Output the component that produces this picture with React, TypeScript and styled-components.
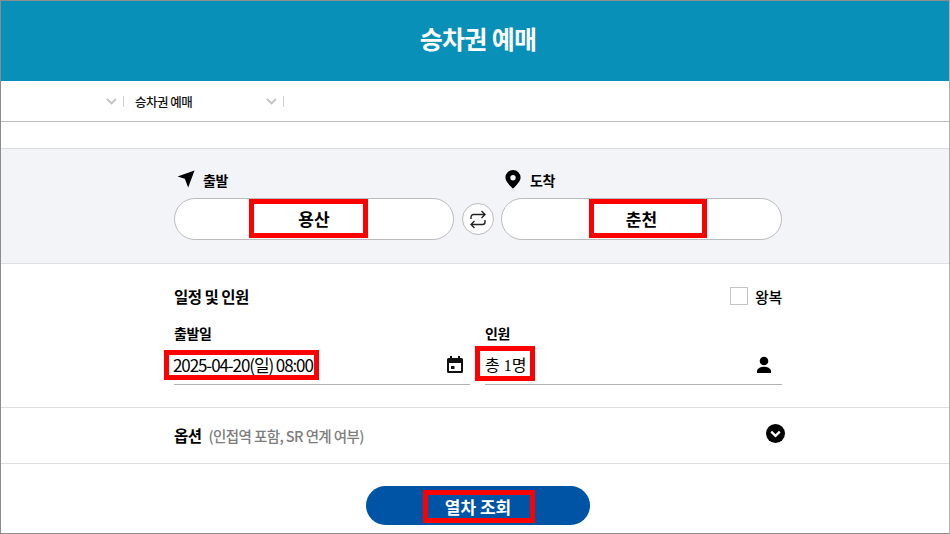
import React from "react";
import styled, { createGlobalStyle } from "styled-components";

const Global = createGlobalStyle`
  html, body { margin: 0; padding: 0; background: #fff; }
  body { font-family: "Noto Sans CJK KR", "Noto Sans", sans-serif; color: #000; }
  * { box-sizing: border-box; }
`;

const Frame = styled.div`
  width: 950px;
  height: 534px;
  overflow: hidden;
  border: 1px solid #8c8c8c;
  border-right-color: #b0b0b0;
  display: flex;
  flex-direction: column;
  background: #fff;
`;

const Header = styled.header`
  height: 80px;
  flex: none;
  background: #0890b9;
  display: flex;
  align-items: center;
  justify-content: center;
  color: #fff;
  font-size: 25px;
  font-weight: 700;
  letter-spacing: -0.7px;
  padding: 0 0 7px 6px;
`;

const Crumbs = styled.nav`
  height: 41px;
  flex: none;
  border-bottom: 1px solid #bdbdbd;
  display: flex;
  align-items: center;
  padding-left: 105px;
`;

const Chevron = styled.svg`
  width: 11px;
  height: 7px;
  flex: none;
`;

const Divider = styled.span<{ $gap: number }>`
  width: 1px;
  height: 11px;
  background: #d0d0d0;
  margin-left: ${(p) => p.$gap}px;
`;

const CrumbText = styled.span`
  font-size: 12.5px;
  font-weight: 500;
  letter-spacing: -0.5px;
  width: 131px;
  margin-left: 11px;
  color: #111;
`;

const Spacer = styled.div`
  height: 27px;
  flex: none;
  border-bottom: 1px solid #dcdcdc;
`;

const StationPanel = styled.section`
  height: 115px;
  flex: none;
  background: #f3f4f8;
  border-bottom: 1px solid #dfdfdf;
  padding: 18px 0 0 173px;
`;

const Inner = styled.div`
  width: 608px;
`;

const Labels = styled.div`
  display: flex;
  height: 24px;
  margin-bottom: 7px;
`;

const LabelCell = styled.div<{ $width: number }>`
  width: ${(p) => p.$width}px;
  display: flex;
  align-items: center;
  gap: 8px;
  font-size: 14px;
  font-weight: 700;
  letter-spacing: -0.4px;
  padding-left: 3px;
`;

const LabelText = styled.span`
  padding-top: 2px;
`;

const Stations = styled.div`
  display: flex;
  align-items: center;
  gap: 8px;
`;

const Pill = styled.div<{ $width: number }>`
  width: ${(p) => p.$width}px;
  height: 42px;
  border: 1px solid #bcbcbc;
  border-radius: 21px;
  background: #fff;
  display: flex;
  justify-content: center;
  align-items: stretch;
`;

const StationMark = styled.div<{ $width: number; $shift: number }>`
  width: ${(p) => p.$width}px;
  border: 5px solid #fe0000;
  display: flex;
  align-items: center;
  justify-content: center;
  font-size: 17px;
  font-weight: 700;
  margin-left: ${(p) => Math.max(p.$shift, 0) * 2}px;
  margin-right: ${(p) => Math.max(-p.$shift, 0) * 2}px;
  padding-left: ${(p) => Math.max(-p.$shift, 0) * 2}px;
  padding-right: ${(p) => Math.max(p.$shift, 0) * 2}px;
  margin-bottom: 1px;
`;

const Swap = styled.button`
  width: 32px;
  height: 32px;
  flex: none;
  padding: 0;
  margin-right: -1px;
  border: 1px solid #bcbcbc;
  border-radius: 50%;
  background: #fff;
  display: flex;
  align-items: center;
  justify-content: center;
`;

const Schedule = styled.section`
  height: 144px;
  flex: none;
  border-bottom: 1px solid #dfdfdf;
  padding: 19px 0 0 173px;
`;

const TitleRow = styled.div`
  display: flex;
  justify-content: space-between;
  align-items: center;
  height: 26px;
  margin-bottom: 14px;
`;

const Title = styled.h2`
  margin: 0;
  font-size: 15.5px;
  font-weight: 700;
  letter-spacing: -0.5px;
`;

const RoundTrip = styled.label`
  display: flex;
  align-items: center;
  gap: 7px;
  font-size: 15px;
  font-weight: 500;
  letter-spacing: -0.3px;
`;

const Box = styled.span`
  width: 18px;
  height: 18px;
  border: 1px solid #c4c4c4;
  background: #fff;
`;

const Fields = styled.div`
  display: grid;
  grid-template-columns: 296px 297px;
  column-gap: 15px;
`;

const Field = styled.div`
  display: flex;
  flex-direction: column;
`;

const FieldLabel = styled.div`
  font-size: 14px;
  font-weight: 700;
  letter-spacing: -0.4px;
  height: 20px;
  line-height: 20px;
  margin-bottom: 4px;
`;

const FieldValue = styled.div<{ $iconGap: number }>`
  height: 38px;
  border-bottom: 1px solid #b4b4b4;
  display: flex;
  align-items: flex-start;
  justify-content: space-between;
  padding-right: ${(p) => p.$iconGap}px;
`;

const DateMark = styled.div`
  margin: 3px 0 0 -10px;
  width: 155px;
  height: 30px;
  border: 5px solid #fe0000;
  font-size: 17px;
  letter-spacing: -1.1px;
  display: flex;
  align-items: center;
  padding: 0 0 2px 4px;
  white-space: nowrap;
`;

const PeopleMark = styled.div`
  margin: -1px 0 0 -10px;
  width: 60px;
  height: 35px;
  border: 5px solid #fe0000;
  font-family: "Liberation Serif", "Noto Sans CJK KR", serif;
  font-size: 16px;
  display: flex;
  align-items: center;
  padding-left: 5px;
  white-space: nowrap;
`;

const FieldIcon = styled.svg`
  width: 20px;
  height: 20px;
  margin-top: 8px;
  flex: none;
`;

const Options = styled.section`
  height: 56px;
  flex: none;
  border-bottom: 1px solid #dfdfdf;
  padding: 0 0 0 173px;
  display: flex;
  align-items: center;
`;

const OptionsInner = styled.div`
  width: 611px;
  display: flex;
  align-items: center;
  justify-content: space-between;
`;

const OptionsText = styled.div`
  display: flex;
  align-items: baseline;
  gap: 7px;
  padding-bottom: 2px;
  font-size: 15.5px;
  font-weight: 700;
  letter-spacing: -0.5px;
`;

const OptionsHint = styled.span`
  font-size: 14.5px;
  font-weight: 500;
  color: #7d7d7d;
  letter-spacing: -0.6px;
`;

const ExpandIcon = styled.svg`
  width: 19px;
  height: 19px;
  margin-top: -4px;
`;

const Actions = styled.div`
  display: flex;
  justify-content: center;
  padding: 22px 0 0 6px;
`;

const Search = styled.button`
  width: 224px;
  height: 39px;
  border: 0;
  padding: 4px 0 0 2px;
  border-radius: 20px;
  background: #0054a6;
  display: flex;
  justify-content: center;
  align-items: flex-start;
  font-family: inherit;
`;

const SearchMark = styled.span`
  width: 112px;
  height: 33px;
  border: 5px solid #fe0000;
  color: #fff;
  font-size: 17px;
  font-weight: 700;
  display: flex;
  align-items: center;
  justify-content: center;
  padding-right: 2px;
`;

const ChevronDown = () => (
  <Chevron viewBox="0 0 11 7" fill="none" stroke="#c2c2c8" strokeWidth="1.8">
    <path d="M1 1l4.5 4.5L10 1" />
  </Chevron>
);

export default function App() {
  return (
    <>
      <Global />
      <Frame>
        <Header>승차권 예매</Header>
        <Crumbs>
          <ChevronDown />
          <Divider $gap={6} />
          <CrumbText>승차권 예매</CrumbText>
          <ChevronDown />
          <Divider $gap={6} />
        </Crumbs>
        <Spacer />
        <StationPanel>
          <Inner>
            <Labels>
              <LabelCell $width={327}>
                <svg width="18" height="18" viewBox="0 0 18 18">
                  <path d="M17.500 .5 .5 6.500l7.300 2.300L11.200 17.500z" fill="#000" />
                </svg>
                <LabelText>출발</LabelText>
              </LabelCell>
              <LabelCell $width={281}>
                <svg width="18" height="20" viewBox="0 0 18 20">
                  <path
                    fillRule="evenodd"
                    d="M9 1a7.600 7.600 0 0 0-7.600 7.600C1.400 13.500 9 19.500 9 19.500s7.600-6 7.600-10.900A7.600 7.600 0 0 0 9 1zm0 5a2.700 2.700 0 1 1 0 5.400A2.700 2.700 0 0 1 9 6z"
                    fill="#000"
                  />
                </svg>
                <LabelText>도착</LabelText>
              </LabelCell>
            </Labels>
            <Stations>
              <Pill $width={280}>
                <StationMark $width={119} $shift={-6}>용산</StationMark>
              </Pill>
              <Swap aria-label="swap">
                <svg width="18" height="19" viewBox="0 0 18 19" fill="none" stroke="#222" strokeWidth="1.4">
                  <path d="M2 9V7a2.500 2.500 0 0 1 2.500-2.500H16M12.500 1l3.500 3.500L12.500 8" />
                  <path d="M16 10v2a2.500 2.500 0 0 1-2.500 2.500H2M5.500 11 2 14.500 5.500 18" />
                </svg>
              </Swap>
              <Pill $width={281}>
                <StationMark $width={118} $shift={6}>춘천</StationMark>
              </Pill>
            </Stations>
          </Inner>
        </StationPanel>
        <Schedule>
          <Inner>
            <TitleRow>
              <Title>일정 및 인원</Title>
              <RoundTrip>
                <Box />
                왕복
              </RoundTrip>
            </TitleRow>
            <Fields>
              <Field>
                <FieldLabel>출발일</FieldLabel>
                <FieldValue $iconGap={5}>
                  <DateMark>2025-04-20(일) 08:00</DateMark>
                  <FieldIcon viewBox="0 0 20 20">
                    <path
                      fillRule="evenodd"
                      d="M5 1h2v2h6V1h2v2h1.500A1.500 1.500 0 0 1 18 4.500v12a1.500 1.500 0 0 1-1.500 1.500h-13A1.500 1.500 0 0 1 2 16.500v-12A1.500 1.500 0 0 1 3.500 3H5zM4 8v8h12V8zm2 3h3.500v3H6z"
                      fill="#111"
                    />
                  </FieldIcon>
                </FieldValue>
              </Field>
              <Field>
                <FieldLabel>인원</FieldLabel>
                <FieldValue $iconGap={8}>
                  <PeopleMark>총 1명</PeopleMark>
                  <FieldIcon viewBox="0 0 20 20">
                    <circle cx="10" cy="6" r="4.300" fill="#000" />
                    <path d="M3 18v-2c0-2.800 4.300-4.300 7-4.300s7 1.500 7 4.300v2z" fill="#000" />
                  </FieldIcon>
                </FieldValue>
              </Field>
            </Fields>
          </Inner>
        </Schedule>
        <Options>
          <OptionsInner>
            <OptionsText>
              옵션
              <OptionsHint>(인접역 포함, SR 연계 여부)</OptionsHint>
            </OptionsText>
            <ExpandIcon viewBox="0 0 20 20">
              <circle cx="10" cy="10" r="10" fill="#000" />
              <path d="M5.500 8l4.500 4.500L14.500 8" fill="none" stroke="#fff" strokeWidth="2.400" />
            </ExpandIcon>
          </OptionsInner>
        </Options>
        <Actions>
          <Search>
            <SearchMark>열차 조회</SearchMark>
          </Search>
        </Actions>
      </Frame>
    </>
  );
}
